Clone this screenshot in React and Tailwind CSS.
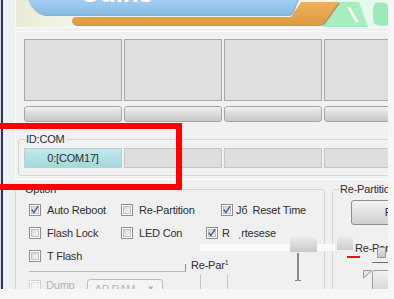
import React from 'react';

const Box = ({ checked, faded }) => (
  <div className={`relative w-[12px] h-[12px] shrink-0 border bg-white p-[1px] ${faded ? 'border-[#d2d2d2]' : 'border-[#8e8f8f]'}`}>
    <div className={`w-full h-full border bg-gradient-to-br ${faded ? 'border-[#e2e2e2] from-[#efefef] to-[#f8f8f8]' : 'border-[#c2c2c2] from-[#d8d8d8] to-[#f6f6f6]'}`} />
    {checked && (
      <svg width="12" height="12" viewBox="0 0 12 12" className="absolute left-[-1px] top-[-1px]">
        <path d="M2.8 5.6 L4.9 8.6 L9.2 2.2" stroke="#3e56a0" strokeWidth="1.4" fill="none" />
      </svg>
    )}
  </div>
);

const Opt = ({ label, checked, w }) => (
  <div className={`flex items-center gap-[6px] ${w}`}>
    <Box checked={checked} />
    <span className="leading-[12px] whitespace-nowrap">{label}</span>
  </div>
);

const Banner = () => (
  <svg width="372" height="27" viewBox="0 0 372 27" className="block">
    <defs>
      <linearGradient id="bnbg" x1="0" x2="1" y1="0" y2="0">
        <stop offset="0" stopColor="#eaebd6" />
        <stop offset="0.18" stopColor="#f4f6ec" />
        <stop offset="1" stopColor="#f4f6ec" />
      </linearGradient>
      <linearGradient id="bnblue" x1="0" x2="0" y1="0" y2="1">
        <stop offset="0" stopColor="#a2cff0" />
        <stop offset="1" stopColor="#86bbe3" />
      </linearGradient>
      <linearGradient id="bnorange" x1="0" x2="0" y1="0" y2="1">
        <stop offset="0" stopColor="#ecb05c" />
        <stop offset="1" stopColor="#de9b42" />
      </linearGradient>
    </defs>
    <rect width="372" height="27" fill="url(#bnbg)" />
    <rect x="310" width="62" height="27" fill="#e4fbec" />
    <path d="M323 2 L343 2 L352 27 L306 27 Z" fill="#a7edbf" />
    <path d="M331 7 L334 7 L343 22 L340 23 Z" fill="#f2fff6" />
    <path d="M359 3 Q372 1 372 6 L372 25 Q362 27 358 23 Q355 12 359 3 Z" fill="#9de9b7" />
    <path d="M61 18 L276 18 L286 3 L324 3 L309 24 Q307 26 303 26 L62 26 Q57 26 57 22 Z" fill="#8a7350" opacity="0.7" />
    <path d="M60 17 L275 17 L285 2 L323 2 L308 23 Q306 25 302 25 L61 25 Q56 25 56 21 Q56 17 60 17 Z" fill="url(#bnorange)" />
    <path d="M13 0 Q18 14 29 16 L273 16 Q276 16 278 12 L283 0 Z" fill="#6a6a5e" opacity="0.55" />
    <path d="M12 0 Q17 13 28 15 L272 15 Q275 15 277 11 L282 0 Z" fill="url(#bnblue)" />
    <text x="64" y="2" fontSize="26" fontWeight="bold" fill="#ffffff" fontFamily="Liberation Sans, Arial, sans-serif">Odin3</text>
  </svg>
);

export default function App() {
  return (
    <div className="relative w-[394px] h-[299px] overflow-hidden bg-[#f6f6f6] font-['Liberation_Sans',Arial,sans-serif] text-[11px] tracking-[-0.2px] text-[#2f2f2f]">
      <div className="relative flex w-[388px] h-[289px] overflow-hidden bg-[#f0f0f0]">
        <div className="w-[1px] shrink-0 bg-[#dcdde4]" />
        <div className="w-[2px] shrink-0 bg-[#2c3462]" />
        <div className="flex-1 min-w-0 flex flex-col overflow-hidden pl-[12px]">
          <div className="w-[373px] h-[28px] shrink-0 border-l border-b border-[#fbfbfb]">
            <Banner />
          </div>

          <div className="mt-[3px] w-[380px] shrink-0 border border-[#fbfbfb] bg-[#f1f1f1] pt-[7px] pl-[2px] pb-[3px]">
            <div className="ml-[6px] flex gap-[2px]">
              {[0, 1, 2, 3].map((i) => (
                <div key={i} className="w-[98px] h-[62px] shrink-0 border border-[#a9a9a9] bg-[#dfdfdf]" />
              ))}
            </div>
            <div className="ml-[6px] mt-[5px] flex gap-[2px]">
              {[0, 1, 2, 3].map((i) => (
                <div key={i} className="w-[98px] h-[16px] shrink-0 rounded-[3px] border border-[#a5a5a5] bg-gradient-to-b from-[#f2f2f2] via-[#dadada] to-[#c9c9c9]" />
              ))}
            </div>
            <fieldset className="mt-[11px] min-w-0 rounded-[3px] border border-[#d2d6da] pl-[5px] pb-[7px]">
              <legend className="ml-[1px] px-[1px] leading-[13px]">ID:COM</legend>
              <div className="mt-[2px] flex gap-[2px]">
                <div className="w-[98px] h-[20px] shrink-0 flex items-center justify-center border border-[#b9cfd0] bg-gradient-to-b from-[#c2e9eb] to-[#a3d8db]">
                  0:[COM17]
                </div>
                {[1, 2, 3].map((i) => (
                  <div key={i} className="w-[98px] h-[20px] shrink-0 border border-[#c6c6c6] bg-[#dedede]" />
                ))}
              </div>
            </fieldset>
          </div>

          <div className="mt-[3px] flex shrink-0">
            <fieldset className="w-[310px] shrink-0 min-w-0 rounded-[3px] border border-[#d2d6da]">
              <legend className="ml-[8px] px-[1px] leading-[13px]">Option</legend>
              <div className="pl-[13px] pt-[8px] flex flex-col">
                <div className="flex items-center h-[12px]">
                  <Opt w="w-[92px]" label="Auto Reboot" checked />
                  <Opt w="w-[100px]" label="Re-Partition" />
                  <div className="flex items-center">
                    <Box checked />
                    <span className="ml-[3px] leading-[12px]">Jб</span>
                    <span className="ml-[5px] leading-[12px]">Reset Time</span>
                  </div>
                </div>
                <div className="mt-[11px] flex items-center h-[12px]">
                  <Opt w="w-[92px]" label="Flash Lock" />
                  <Opt w="w-[85px]" label="LED Con" />
                  <div className="flex items-center">
                    <Box checked />
                    <span className="ml-[4px] leading-[12px]">R</span>
                    <span className="ml-[8px] leading-[12px]">ˌrtesese</span>
                  </div>
                </div>
                <div className="mt-[11px] flex items-center h-[12px]">
                  <Opt w="w-[92px]" label="T Flash" />
                </div>
                <div className="mt-[2px] flex items-end h-[8px]">
                  <div className="w-[157px] h-[8px] shrink-0 border-b border-r border-b-[#bcbcbc] border-r-[#8c8c8c]" />
                  <span className="ml-[5px] mb-[-1px] leading-[13px] whitespace-nowrap">
                    Re-Par<span className="relative top-[-4px] text-[7px]">1</span>
                  </span>
                </div>
                <div className="mt-[7px] flex items-start">
                  <div className="mt-[1px]"><Box faded /></div>
                  <span className="ml-[5px] text-[#b4b4b4] leading-[13px]">Dump</span>
                  <div className="ml-[12px] w-[76px] h-[20px] flex items-center justify-between rounded-[3px] border border-[#bcbcbc] bg-[#f4f4f4] px-[7px] text-[#b4b4b4]">
                    <span>AP RAM</span>
                    <span className="text-[8px]">▼</span>
                  </div>
                </div>
              </div>
            </fieldset>
            <fieldset className="ml-[7px] w-[100px] shrink-0 min-w-0 rounded-[3px] border border-[#d2d6da]">
              <legend className="ml-[6px] px-[1px] leading-[13px] whitespace-nowrap">Re-Partition</legend>
              <div className="ml-[18px] mt-[4px] w-[84px] h-[25px] flex items-center justify-center rounded-[3px] border border-[#8f8f8f] bg-gradient-to-b from-[#f3f3f3] via-[#e2e2e2] to-[#cfcfcf]">
                PIT
              </div>
            </fieldset>
          </div>
        </div>

        {/* glitch artifacts laid over the window */}
        <div className="absolute left-[200px] top-[244px] w-[135px] h-[7px] bg-[#fafafa]" />
        <div className="absolute left-[290px] top-[237px] w-[27px] h-[15px] rounded-t-[3px] bg-gradient-to-b from-[#eaeaea] to-[#c9c9c9]" />
        <div className="absolute left-[337px] top-[237px] w-[16px] h-[13px] rounded-t-[3px] bg-gradient-to-b from-[#eaeaea] to-[#cccccc]" />
        <div className="absolute left-[297px] top-[253px] w-[2px] h-[28px] bg-[#8a8a8a]" />
        <div className="absolute left-[295px] top-[280px] w-[6px] h-[1px] bg-[#8a8a8a]" />
        <div className="absolute left-[200px] top-[274px] w-[1px] h-[15px] bg-[#c4c4c4]" />
        <div className="absolute left-[227px] top-[274px] w-[1px] h-[15px] bg-[#c4c4c4]" />
        <span className="absolute left-[355px] top-[242px] leading-[13px] whitespace-nowrap">Re-Par</span>
        <div className="absolute left-[377px] top-[247px] w-[9px] h-[11px] border border-[#9a9a9a] bg-gradient-to-b from-[#e6e6e6] to-[#c8c8c8]" />
        <div className="absolute left-[347px] top-[256px] w-[13px] h-[2px] bg-[#ee1111]" />
        <div className="absolute left-[372px] top-[262px] w-[16px] h-[1px] bg-[#6f6f6f]" />
        <div className="absolute left-[372px] top-[270px] w-[20px] h-[22px] rounded-tl-[3px] border border-[#9a9a9a] bg-gradient-to-b from-[#f2f2f2] to-[#d6d6d6]" />
        <svg width="10" height="9" viewBox="0 0 10 9" className="absolute left-[363px] top-[270px]">
          <path d="M0.5 0.5 L9 0.5 L0.5 8 Z" fill="#e4e4e4" stroke="#9a9a9a" />
        </svg>
      </div>

      <div className="absolute left-[-10px] top-[123px] w-[192px] h-[67px] border-[6px] border-[#ff0000] z-10" />
    </div>
  );
}
